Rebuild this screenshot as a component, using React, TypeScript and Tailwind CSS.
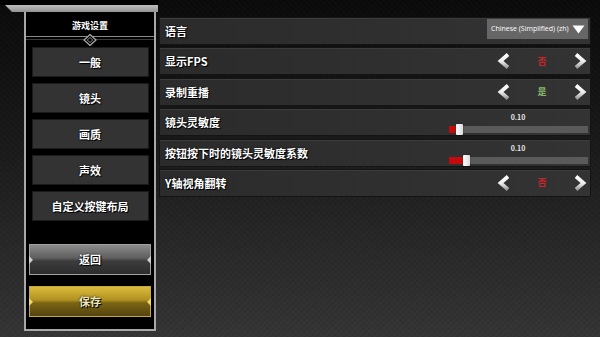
import React from "react";

const font = "font-['Noto_Sans_CJK_SC','Noto_Sans',sans-serif]";
const shadow = "[text-shadow:1px_1px_0_#000,0_0_2px_#000]";

function Chevron({ dir }: { dir: "left" | "right" }) {
  const d = dir === "left" ? "M11 1.5 L3.5 8 L11 14.5" : "M2 1.5 L9.5 8 L2 14.5";
  return (
    <svg width="13" height="16" viewBox="0 0 13 16">
      <defs>
        <linearGradient id={"cg" + dir} x1="0" y1="0" x2="0" y2="1">
          <stop offset="0" stopColor="#ffffff" />
          <stop offset="0.55" stopColor="#ececec" />
          <stop offset="1" stopColor="#9a9a9a" />
        </linearGradient>
      </defs>
      <path d={d} fill="none" stroke={`url(#cg${dir})`} strokeWidth="3.8" strokeLinecap="butt" strokeLinejoin="miter" />
    </svg>
  );
}

function Row({ label, children, top }: { label: string; children?: React.ReactNode; top?: boolean }) {
  return (
    <div className={`flex h-[28px] w-[432px] ${top ? "items-start" : "items-center"} border border-[#141414] bg-[linear-gradient(to_right,#2b2b2b,#333333)] shadow-[inset_0_1px_0_#3c3c3c]`}>
      <span className={`${font} ${shadow} pl-[5px] text-[11px] font-bold leading-[26px] text-white`}>{label}</span>
      <div className="ml-auto flex h-full items-start">{children}</div>
    </div>
  );
}

function Toggle({ value, color }: { value: string; color: string }) {
  return (
    <div className="flex h-full items-center pr-[3px]">
      <Chevron dir="left" />
      <span className={`${font} w-[64px] text-center text-[9px] font-bold ${color}`}>{value}</span>
      <Chevron dir="right" />
    </div>
  );
}

function Slider({ fill }: { fill: number }) {
  return (
    <div className="flex w-[141px] flex-col items-center pr-[3px] pt-[3px]">
      <span className={`${font} text-[7px] font-bold leading-[10px] text-[#e8e8e8]`}>0.10</span>
      <div className="relative mt-[4px] h-[7px] w-[139px] bg-[#5a5a5a]">
        <div className="absolute left-0 top-0 h-[7px] bg-[#c40a0a]" style={{ width: fill }} />
        <div
          className="absolute top-[-2px] h-[11px] w-[7px] rounded-[1px] bg-[linear-gradient(to_right,#ffffff,#dcdcdc)] shadow-[0_0_1px_#000]"
          style={{ left: fill }}
        />
      </div>
    </div>
  );
}

function SideButton({ label }: { label: string }) {
  return (
    <div className={`flex h-[30px] w-[117px] items-center justify-center border border-[#1a1a1a] bg-[#333333] ${font} ${shadow} text-[11px] font-bold text-white`}>
      {label}
    </div>
  );
}

function Notches({ color }: { color: string }) {
  return (
    <>
      <div className={`absolute left-[-1px] top-1/2 h-0 w-0 -translate-y-1/2 border-y-[4px] border-l-[4px] border-y-transparent ${color}`} />
      <div className={`absolute right-[-1px] top-1/2 h-0 w-0 -translate-y-1/2 border-y-[4px] border-r-[4px] border-y-transparent ${color}`} />
    </>
  );
}

export default function App() {
  return (
    <div className="relative flex h-[337px] w-[600px] overflow-hidden bg-[repeating-linear-gradient(45deg,rgba(255,255,255,0.012)_0_2px,transparent_2px_4px),repeating-linear-gradient(-45deg,rgba(0,0,0,0.06)_0_2px,transparent_2px_4px),linear-gradient(to_bottom,#0a0a0a,#181818_40%,#353535)]">
      {/* left panel */}
      <div className="flex w-[159px] shrink-0 flex-col">
        <div className="h-[5px] bg-black" />
        <div className="ml-[5px] h-[7px] w-[153px] bg-[linear-gradient(to_bottom,#bcbcbc,#949494)] [clip-path:polygon(0_0,100%_0,100%_100%,7px_100%)]" />
        <div className="ml-[24px] flex h-[319px] w-[132px] flex-col items-center border-x-2 border-b-2 border-[#a8a8a8] bg-black">
          <div className={`${font} ${shadow} mt-[8px] text-[9px] font-bold leading-[12px] text-white`}>游戏设置</div>
          <div className="relative mt-[4px] h-[4px] w-full border-t border-[#8a8a8a]">
            <div className="absolute left-0 right-0 top-[2px] h-px bg-[#3a3a3a]" />
            <svg className="absolute left-1/2 top-[-3px] -translate-x-1/2" width="14" height="12" viewBox="0 0 14 12">
              <path d="M7 0.5 L13 6 L7 11.5 L1 6 Z" fill="#000" stroke="#b0b0b0" strokeWidth="1.2" />
              <path d="M7 3.5 L9.8 6 L7 8.5 L4.2 6 Z" fill="none" stroke="#8a8a8a" strokeWidth="1" />
            </svg>
          </div>
          <div className="mt-[7px] flex flex-col gap-[6px]">
            <SideButton label="一般" />
            <SideButton label="镜头" />
            <SideButton label="画质" />
            <SideButton label="声效" />
            <SideButton label="自定义按键布局" />
          </div>
          <div className={`relative mt-[23px] flex h-[31px] w-[122px] items-center justify-center border border-[#a0a0a0] bg-[linear-gradient(to_bottom,#8c8c8c,#5e5e5e_45%,#3c3c3c_55%,#2c2c2c)] ${font} ${shadow} text-[11px] font-bold text-white`}>
            返回
            <Notches color="border-l-[#cfcfcf] border-r-[#cfcfcf]" />
          </div>
          <div className={`relative mt-[11px] flex h-[31px] w-[122px] items-center justify-center border border-[#c4a646] bg-[linear-gradient(to_bottom,#dcbc3c,#b09020_45%,#7a6414_55%,#54440e)] ${font} ${shadow} text-[11px] font-bold text-[#efe6b8]`}>
            保存
            <Notches color="border-l-[#f0d860] border-r-[#f0d860]" />
          </div>
        </div>
      </div>

      {/* right rows */}
      <div className="flex flex-col gap-[2.4px] pt-[17px]">
        <Row label="语言" top>
          <div className="mr-[2px] mt-[1px] flex h-[20px] w-[101px] items-center bg-[#666666] pl-[4px]">
            <span className="whitespace-nowrap font-['Open_Sans',sans-serif] text-[7px] text-white">Chinese (Simplified) (zh)</span>
            <svg className="ml-auto mr-[3px] shrink-0" width="13" height="9" viewBox="0 0 13 9">
              <path d="M0.5 0.5 H12.5 L6.5 8.5 Z" fill="#ffffff" />
            </svg>
          </div>
        </Row>
        <Row label="显示FPS">
          <Toggle value="否" color="text-[#c8262c]" />
        </Row>
        <Row label="录制重播">
          <Toggle value="是" color="text-[#86b86a]" />
        </Row>
        <Row label="镜头灵敏度">
          <Slider fill={7} />
        </Row>
        <Row label="按钮按下时的镜头灵敏度系数">
          <Slider fill={14} />
        </Row>
        <Row label="Y轴视角翻转">
          <Toggle value="否" color="text-[#c8262c]" />
        </Row>
      </div>
    </div>
  );
}
